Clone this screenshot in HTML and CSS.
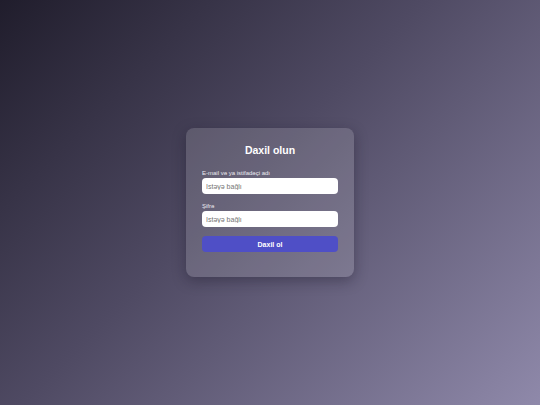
FILE: index.html
```html
<!DOCTYPE html>
<html lang="az">
<head>
<meta charset="utf-8">
<title>Daxil olun</title>
<link rel="stylesheet" href="styles.css">
</head>
<body>
<main class="page">
  <form class="card">
    <h1 class="title">Daxil olun</h1>
    <label class="field">
      <span class="label">E-mail və ya istifadəçi adı</span>
      <input class="input" type="text" placeholder="İstəyə bağlı">
    </label>
    <label class="field">
      <span class="label">Şifrə</span>
      <input class="input" type="password" placeholder="İstəyə bağlı">
    </label>
    <button class="button" type="button">Daxil ol</button>
  </form>
</main>
</body>
</html>
```
FILE: styles.css
```css
* { box-sizing: border-box; }
html, body { margin: 0; height: 100%; }
body {
  font-family: "Liberation Sans", Arial, sans-serif;
  background: linear-gradient(135deg, #201d2c 0%, #4f4a63 45%, #8f89aa 100%);
}
.page {
  height: 405px;
  display: flex;
  align-items: center;
  justify-content: center;
}
.card {
  width: 168px;
  padding: 15px 16px 25px;
  border-radius: 8px;
  background: rgba(255, 255, 255, 0.14);
  box-shadow: 0 4px 14px rgba(20, 16, 35, 0.35);
  display: flex;
  flex-direction: column;
}
.title {
  margin: 0 0 13px;
  text-align: center;
  color: #ffffff;
  font-size: 10.5px;
  font-weight: bold;
  line-height: 14px;
}
.field {
  display: flex;
  flex-direction: column;
  margin-bottom: 9px;
}
.label {
  color: #ebe9f0;
  font-size: 6px;
  line-height: 7px;
  margin-bottom: 1px;
}
.input {
  height: 16px;
  border: none;
  border-radius: 4px;
  background: #ffffff;
  padding: 0 4px;
  font-family: "Liberation Sans", Arial, sans-serif;
  font-size: 7px;
  color: #333;
  outline: none;
}
.input::placeholder { color: #757575; }
.button {
  height: 16px;
  border: none;
  border-radius: 4px;
  background: #4f4fc6;
  color: #ffffff;
  font-family: "Liberation Sans", Arial, sans-serif;
  font-size: 7px;
  font-weight: bold;
  padding: 0;
}
```
